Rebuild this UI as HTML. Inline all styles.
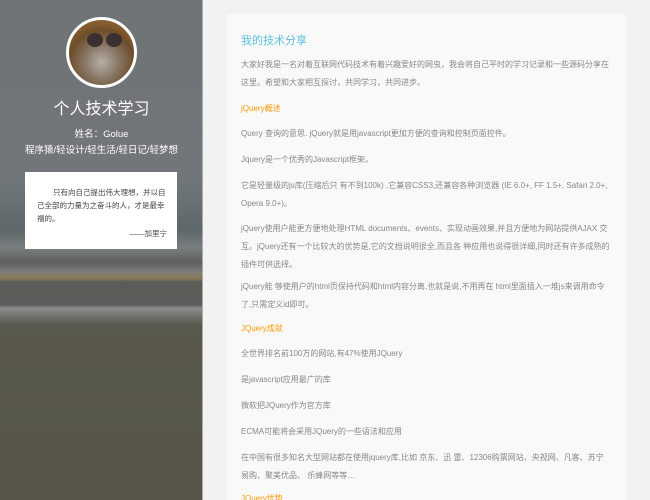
<!DOCTYPE html>
<html><head><meta charset="utf-8"><style>
*{margin:0;padding:0;box-sizing:border-box}
html,body{width:650px;height:500px;overflow:hidden}
body{background:#f2f2f2;font-family:"Liberation Sans","Noto Sans CJK SC",sans-serif;position:relative}
.side{position:absolute;left:0;top:0;width:203px;height:500px;background:linear-gradient(#6f7375 0,#72767a 170px,#6c7478 190px,#5e676a 230px,#7a7e80 248px,#5f605e 262px,#7b7d7c 272px,#8a7a55 278px,#5b5c58 282px,#5d5e5b 305px,#8c8e8c 308px,#6b6d68 318px,#5a594d 325px,#57554a 500px);border-right:1px solid #aaa}
.av{position:absolute;left:66px;top:17px;width:71px;height:71px;border-radius:50%;border:3px solid #fff;background:radial-gradient(circle at 50% 65%,#b9b0a8 0,#8a7a6a 30%,#6e4d2a 60%,#b07a3a 100%)}
.ear{position:absolute;width:16px;height:14px;border-radius:50%;background:#3a3030;top:13px}
.t{position:absolute;left:0;width:203px;text-align:center;color:#fff}
.q{position:absolute;left:25px;top:172px;width:152px;height:77px;background:#fff;font-size:7.5px;color:#444;line-height:13px;padding:14px 10px 0 12px}
.main{position:absolute;left:227px;top:14px;width:399px;height:486px;background:#f9f9f9}
.p{position:absolute;left:241px;font-size:8px;color:#888;line-height:18px;width:375px;white-space:nowrap}
.h{position:absolute;left:241px;font-size:8px;color:#f90;}
</style></head><body>
<div class="side">
<div class="av"><div class="ear" style="left:18px"></div><div class="ear" style="left:37px"></div></div>
<div class="t" style="top:95px;font-size:16px">个人技术学习</div>
<div class="t" style="top:126px;font-size:9.5px">姓名：Golue</div>
<div class="t" style="top:142px;font-size:9.5px">程序猿/轻设计/轻生活/轻日记/轻梦想</div>
<div class="q"><div style="text-indent:16px">只有向自己提出伟大理想，并以自己全部的力量为之奋斗的人，才是最幸福的。</div><div style="text-align:right;margin-top:2px">——加里宁</div></div>
</div>
<div class="main"></div>
<div class="h" style="top:32px;font-size:11px;color:#5bc0de">我的技术分享</div>
<div class="p" style="top:56px">大家好我是一名对着互联网代码技术有着兴趣爱好的网虫，我会将自己平时的学习记录和一些源码分享在<br>这里。希望和大家相互探讨，共同学习，共同进步。</div>
<div class="h" style="top:103px">jQuery概述</div>
<div class="p" style="top:125px">Query 查询的意思. jQuery就是用javascript更加方便的查询和控制页面控件。</div>
<div class="p" style="top:151px">Jquery是一个优秀的Javascript框架。</div>
<div class="p" style="top:177px">它是轻量级的js库(压缩后只 有不到100k) ,它兼容CSS3,还兼容各种浏览器 (IE 6.0+, FF 1.5+, Safari 2.0+,<br>Opera 9.0+)。</div>
<div class="p" style="top:220px">jQuery使用户能更方便地处理HTML documents、events、实现动画效果,并且方便地为网站提供AJAX 交<br>互。jQuery还有一个比较大的优势是,它的文档说明很全,而且各 种应用也说得很详细,同时还有许多成熟的<br>插件可供选择。</div>
<div class="p" style="top:278px">jQuery能 够使用户的html页保持代码和html内容分离,也就是说,不用再在 html里面插入一堆js来调用命令<br>了,只需定义id即可。</div>
<div class="h" style="top:323px">JQuery成就</div>
<div class="p" style="top:345px">全世界排名前100万的网站,有47%使用JQuery</div>
<div class="p" style="top:371px">是javascript应用最广的库</div>
<div class="p" style="top:397px">微软把JQuery作为官方库</div>
<div class="p" style="top:423px">ECMA可能将会采用JQuery的一些语法和应用</div>
<div class="p" style="top:449px">在中国有很多知名大型网站都在使用jquery库,比如 京东、迅 雷、12306购票网站、央视网、凡客、苏宁<br>易购、聚美优品、 乐蜂网等等…</div>
<div class="h" style="top:493px">JQuery优势</div>
</body></html>
